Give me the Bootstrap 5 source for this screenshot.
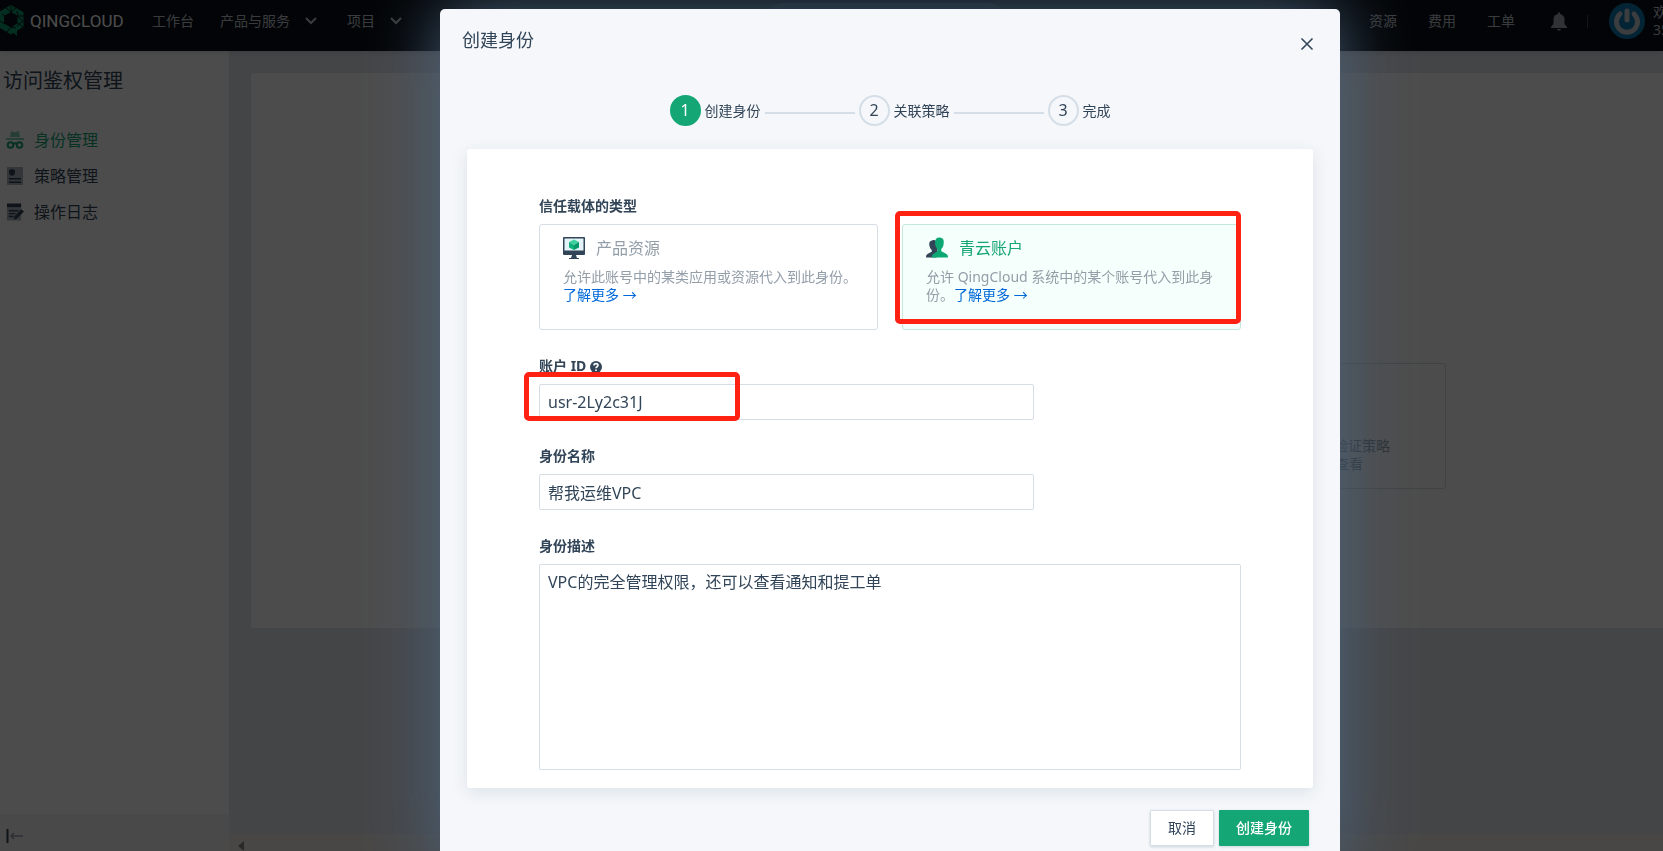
<!DOCTYPE html>
<html lang="zh-CN">
<head>
<meta charset="utf-8">
<meta name="viewport" content="width=device-width, initial-scale=1">
<title>访问鉴权管理 - QingCloud</title>
<link href="https://cdn.jsdelivr.net/npm/bootstrap@5.3.0/dist/css/bootstrap.min.css" rel="stylesheet">
<style>
:root { --ink: #324558; --line: #d5dee7; --brand: #15a675; --muted-ink: #939ea9; }
html, body { height: 100%; }
body { font-family: "Noto Sans", "Noto Sans CJK SC", sans-serif; font-size: 14px; line-height: 18px; color: var(--ink); overflow: hidden; background: #e5e8ee; }
a { text-decoration: none; }
/* top bar */
.topbar { height: 51px; background: #080f18; padding-bottom: 9px; overflow: hidden; box-shadow: 0 1px 6px rgba(0,0,0,.15); position: relative; }
.topbar a, .topbar .user-text { color: #c2c7ce; white-space: nowrap; }
.brand-text { font-family: "Liberation Sans Narrow", Roboto, sans-serif; font-size: 17px; color: #fff !important; margin-left: 5px; width: 93px; }
.nav-start { gap: 26px; margin-left: 29px; }
.nav-start a:has(svg) { display: flex; align-items: center; gap: 15px; }
.nav-end { gap: 31px; }
.nav-search { width: 240px; height: 36px; border: 0; border-radius: 18px; background: #1f2a36; }
.bell { margin-left: 36px; }
.divider { width: 1px; height: 13px; background: #444b55; margin: 0 21px 0 20px; }
.user-text { width: 10px; overflow: hidden; margin-left: 8px; }
/* side bar */
.sidebar { width: 229px; background: #fff; }
.sidebar h1 { font-size: 20px; line-height: 28px; font-weight: 400; padding: 16px 3px 0; margin: 0 0 33px; }
.sidebar .menu-link { font-size: 16px; line-height: 24px; padding: 0 6px; gap: 10px; color: var(--ink); margin-bottom: 12px; }
.sidebar .menu-link.current { color: var(--brand); }
.sidebar-foot { height: 37px; background: #f3f5f9; padding: 8px 6px 0; }
.panel { height: 555px; background: #fff; border-radius: 3px 0 0 3px; margin: 22px 0 0 22px; padding: 290px 217px 0 0; }
.tip { width: 320px; height: 126px; border: 1px solid #d5dee7; border-radius: 3px; padding: 73px 55px 0 0; color: var(--muted-ink); }
.tip-second { padding-right: 27px; }
.scroll-strip { height: 17px; background: #f0eeec; padding: 7px 0 0 9px; }
/* dialog */
.veil { position: fixed; inset: 0; background: rgba(0,0,0,.7); overflow: hidden; display: grid; grid-template-columns: 440fr minmax(0,900px) 323fr; }
.dialog { grid-column: 2; margin-top: 9px; background: #f5f7fa; border-radius: 5px; box-shadow: 0 0 70px #4c647d; align-self: start; padding-bottom: 24px; }
.dialog h2 { font-size: 18px; line-height: 24px; font-weight: 400; margin: 0; }
.dialog-head { padding: 19px 26px 0 22px; }
.close-btn { border: 0; background: none; padding: 0; width: 14px; height: 14px; margin-top: 9px; display: flex; color: var(--ink); }
.steps { margin: 43px 0 23px; gap: 4px; }
.step-num { width: 31px; height: 31px; border-radius: 50%; border: 2px solid var(--line); font-size: 16px; line-height: 27px; text-align: center; }
.step-num.on { background: var(--brand); border-color: var(--brand); color: #fff; }
.step-bar { width: 90px; height: 2px; background: var(--line); margin-top: 4px; }
.form-card { margin: 0 27px; background: #fff; border-radius: 3px; padding: 47px 72px 18px; box-shadow: 0 4px 16px rgba(40,80,110,.12); }
.field-title { display: block; font-size: 14px; line-height: 20px; font-weight: 700; margin-bottom: 8px; }
.choices { display: grid; grid-template-columns: 1fr 1fr; gap: 24px; margin-bottom: 26px; }
.choice { position: relative; height: 106px; border: 1px solid var(--line); border-radius: 3px; padding: 11px 19px 0 23px; color: var(--muted-ink); cursor: pointer; }
.choice.chosen { background: #f5fffb; border-color: #c5e8da; }
.choice-name { font-size: 16px; line-height: 24px; gap: 11px; margin-bottom: 8px; }
.choice.chosen .choice-name { color: var(--brand); }
.choice a { color: #0068d9; }
.field { max-width: 495px; margin-bottom: 26px; position: relative; }
.dialog .form-control { border: 1px solid var(--line); border-radius: 2px; color: var(--ink); font-size: 16px; line-height: 24px; padding: 5px 8px; background: #fff; }
.dialog input.form-control { height: 36px; }
.dialog textarea.form-control { height: 206px; resize: none; }
.ring { position: absolute; border: 5px solid #ff2112; border-radius: 5px; pointer-events: none; }
.ring-choice { inset: -14px -1px 5px -8px; }
.ring-id { left: -15px; top: 16px; width: 216px; height: 49px; }
.dialog-foot { padding: 22px 31px 0; gap: 5px; }
.dialog-foot .btn { height: 36px; border-radius: 1px; font-size: 14px; line-height: 18px; padding: 0 17px; box-shadow: 0 1px 3px rgba(40,80,110,.2); }
.btn-plain { background: #fff; border: 1px solid var(--line); color: var(--ink); }
.btn-go { background: var(--brand); border: 0; color: #fff; font-weight: 500; }
</style>
</head>
<body class="d-flex flex-column">
<header class="topbar d-flex align-items-center">
  <svg width="25" height="32" viewBox="0 0 25 32" class="flex-shrink-0" aria-hidden="true"><path d="M11 3.500 20.500 9V20L11 26 1 20V9Z" fill="none" stroke="#0c9a6b" stroke-width="6"/><path d="M10 25l7-2v8z" fill="#0c9a6b"/><path d="M6 3l5 4 5-4M17 6l1 5 6 0M17 11l6 5-6 5M18 18l5 4M16 23l-5-1-4 5M11 1v6M2 9l4 3M0 16l5 3" stroke="#080f18" fill="none"/></svg>
  <a href="#" class="brand-text">QINGCLOUD</a>
  <nav class="nav-start d-flex align-items-center">
    <a href="#">工作台</a>
    <a href="#">产品与服务 <svg width="12" height="8" viewBox="0 0 12 8" fill="none" stroke="currentColor" stroke-width="2"><path d="M1 1l5 5 5-5"/></svg></a>
    <a href="#" class="ms-1">项目 <svg width="12" height="8" viewBox="0 0 12 8" fill="none" stroke="currentColor" stroke-width="2"><path d="M1 1l5 5 5-5"/></svg></a>
  </nav>
  <div class="flex-fill d-flex justify-content-center"><input class="nav-search" type="search" aria-label="搜索"></div>
  <nav class="nav-end d-flex align-items-center">
    <a href="#">资源</a><a href="#">费用</a><a href="#">工单</a>
  </nav>
  <svg class="bell flex-shrink-0" width="16" height="19" viewBox="0 0 16 19" fill="#a5a9ae"><path d="M8 0l1 1v1c3 .5 4.500 3 4.500 5v5L16 15v1H0v-1l2.500-3V7C2.500 4.500 4 2.500 7 2V1zM6 17h4c-.5 2-3.500 2-4 0z"/></svg>
  <span class="divider flex-shrink-0"></span>
  <svg class="flex-shrink-0" width="36" height="36" viewBox="0 0 36 36"><circle cx="18" cy="18" r="18" fill="#0d78b0"/><path d="M11 11A10.500 10.500 0 1 0 25 11" fill="none" stroke="#c9ccd0" stroke-width="5" stroke-linecap="round"/><path d="M18 8v9" stroke="#c9ccd0" stroke-width="5" stroke-linecap="round"/></svg>
  <div class="user-text">欢迎<br>35</div>
</header>

<div class="d-flex flex-fill">
  <aside class="sidebar d-flex flex-column flex-shrink-0">
    <h1>访问鉴权管理</h1>
    <a href="#" class="menu-link current d-flex align-items-center"><svg width="18" height="18" viewBox="0 0 18 18"><path d="M5 0l4 1.500L13 0l1 6H4zM0 7h18v2H0z" fill="#7fcfb2"/><g fill="none" stroke="#15a675" stroke-width="2"><circle cx="4.500" cy="14" r="2.800"/><circle cx="13.500" cy="14" r="2.800"/><path d="M7 13q2-1.500 4 0"/></g></svg>身份管理</a>
    <a href="#" class="menu-link d-flex align-items-center"><svg width="18" height="18" viewBox="0 0 18 18"><rect x="1" width="16" height="18" rx="1" fill="#a9b4be"/><path d="M6 2l3 1v3q0 2-3 3-3-1-3-3V3zM3 11h12v1.500H3zM3 14.500h12V16H3z" fill="#324558"/></svg>策略管理</a>
    <a href="#" class="menu-link d-flex align-items-center"><svg width="18" height="18" viewBox="0 0 19 18"><path d="M1 4h15v14H1z" fill="#a9b4be"/><path d="M1 0h15v4H1zM3 7h10v1.500H3zM3 10h7v1.500H3zM3 13h5v1.500H3zM8 17l1-3.500L16 6l3 2.500-8 8z" fill="#324558"/></svg>操作日志</a>
    <div class="sidebar-foot mt-auto"><svg width="18" height="28" viewBox="0 0 18 28"><path d="M1.500 7v14" stroke="#324558" stroke-width="2"/><path d="M17 14H5M8 11l-3 3 3 3" stroke="#99a" stroke-width="1.500" fill="none"/></svg></div>
  </aside>
  <main class="flex-fill d-flex flex-column">
    <section class="panel d-flex justify-content-end"><div class="tip text-end">验证策略<div class="tip-second">查看</div></div></section>
    <div class="scroll-strip mt-auto"><svg class="d-block" width="6" height="10" viewBox="0 0 6 10"><path d="M6 0v10L0 5z" fill="#8a8a8a"/></svg></div>
  </main>
</div>

<div class="veil">
  <div class="dialog" role="dialog" aria-labelledby="dlg-title">
    <div class="dialog-head d-flex justify-content-between align-items-start">
      <h2 id="dlg-title">创建身份</h2>
      <button type="button" class="close-btn" aria-label="关闭"><svg width="14" height="14" viewBox="0 0 14 14" fill="none" stroke="currentColor" stroke-width="1.600"><path d="M1.500 1.500l11 11M12.500 1.500l-11 11"/></svg></button>
    </div>
    <div class="steps d-flex justify-content-center align-items-center">
      <span class="step-num on">1</span><span>创建身份</span><span class="step-bar"></span>
      <span class="step-num">2</span><span>关联策略</span><span class="step-bar"></span>
      <span class="step-num">3</span><span>完成</span>
    </div>
    <form class="form-card">
      <span class="field-title">信任载体的类型</span>
      <div class="choices">
        <div class="choice">
          <div class="choice-name d-flex align-items-center">
            <svg width="22" height="22" viewBox="0 0 22 22"><rect width="22" height="18" rx="1" fill="#324558"/><path d="M1.500 1.500h19v12h-19z" fill="#e3f3f8"/><path d="M9 18h4l1 3h2v1H6v-1h2z" fill="#324558"/><path d="M11 2.500l5 2.500-5 3-5-3z" fill="#3fd09f"/><path d="M6 5l5 3v5l-5-2.500z" fill="#10b07a"/><path d="M16 5l-5 3v5l5-2.500z" fill="#089767"/></svg>
            <span>产品资源</span>
          </div>
          允许此账号中的某类应用或资源代入到此身份。<br><a href="#">了解更多 →</a>
        </div>
        <div class="choice chosen">
          <div class="choice-name d-flex align-items-center">
            <svg width="22" height="22" viewBox="0 0 23 22"><path d="M7 3c2-1 5 1 5 4v8l-1 6H0c0-3 1-3.500 4-5l2-1v-2C4 11 4 10 3.500 8 3 5 4 4 7 3z" fill="#324558"/><path d="M14 0c3 0 5 2 4.500 5 0 3-.5 5-2.500 7v2.500l5 2.500c1.500.8 2 2 2 4H6c0-2 .5-3 2-4l4-2.500V12c-2-2-2.500-4-2.500-7S11 0 14 0z" fill="#0ba873"/></svg>
            <span>青云账户</span>
          </div>
          允许 QingCloud 系统中的某个账号代入到此身份。<a href="#">了解更多 →</a>
          <span class="ring ring-choice"></span>
        </div>
      </div>
      <div class="field">
        <label class="field-title" for="acc">账户 ID <svg width="12" height="12" viewBox="0 0 12 12"><circle cx="6" cy="6" r="6" fill="#324558"/><path d="M4 4.500c0-2.500 4-2.500 4-.2 0 1.500-2 1.400-2 3M6 8.500v1.500" stroke="#fff" stroke-width="1.600" fill="none"/></svg></label>
        <input id="acc" class="form-control" type="text" value="usr-2Ly2c31J">
        <span class="ring ring-id"></span>
      </div>
      <div class="field">
        <label class="field-title" for="nm">身份名称</label>
        <input id="nm" class="form-control" type="text" value="帮我运维VPC">
      </div>
      <label class="field-title" for="ds">身份描述</label>
      <textarea id="ds" class="form-control">VPC的完全管理权限，还可以查看通知和提工单</textarea>
    </form>
    <div class="dialog-foot d-flex justify-content-end">
      <button type="button" class="btn btn-plain">取消</button>
      <button type="button" class="btn btn-go">创建身份</button>
    </div>
  </div>
</div>
<script src="https://cdn.jsdelivr.net/npm/bootstrap@5.3.0/dist/js/bootstrap.bundle.min.js"></script>
</body>
</html>
